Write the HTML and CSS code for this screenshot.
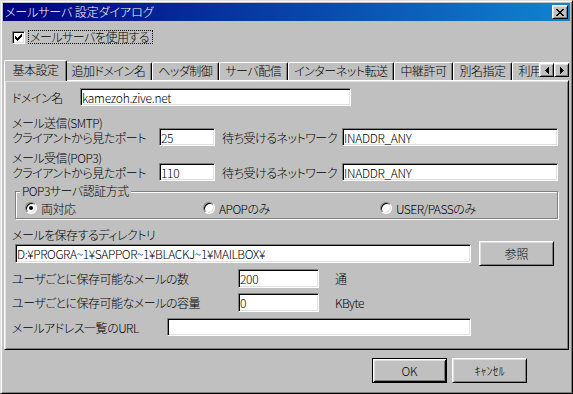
FILE: index.html
```html
<!DOCTYPE html>
<html lang="ja">
<head>
    <meta charset="UTF-8">
    <title>メールサーバ 設定ダイアログ</title>
    <link rel="stylesheet" href="styles.css">
</head>
<body>
<div class="window">
    <div class="titlebar">
        <span class="title">メールサーバ 設定ダイアログ</span>
        <span class="close-btn">
            <svg width="8" height="7" viewBox="0 0 8 7" shape-rendering="crispEdges">
                <path d="M0 0h2v1h-2z M6 0h2v1h-2z M1 1h2v1h-2z M5 1h2v1h-2z M2 2h4v1h-4z M3 3h2v1h-2z M2 4h4v1h-4z M1 5h2v1h-2z M5 5h2v1h-2z M0 6h2v1h-2z M6 6h2v1h-2z"/>
            </svg>
        </span>
    </div>

    <div class="client">
        <div class="enable-row">
            <span class="checkbox">
                <svg width="7" height="7" viewBox="0 0 7 7" shape-rendering="crispEdges">
                    <path d="M0 2h1v3h-1z M1 3h1v3h-1z M2 4h1v3h-1z M3 3h1v3h-1z M4 2h1v3h-1z M5 1h1v3h-1z M6 0h1v3h-1z"/>
                </svg>
            </span>
            <span class="focus-label">メールサーバを使用する</span>
        </div>

        <div class="tabctl">
            <div class="tabs">
                <span class="tab active">基本設定</span>
                <span class="tab">追加ドメイン名</span>
                <span class="tab">ヘッダ制御</span>
                <span class="tab">サーバ配信</span>
                <span class="tab">インターネット転送</span>
                <span class="tab">中継許可</span>
                <span class="tab">別名指定</span>
                <span class="tab">利用者制限</span>
            </div>
            <div class="tab-arrows">
                <span class="arrow-btn">
                    <svg width="4" height="7" viewBox="0 0 4 7" shape-rendering="crispEdges"><path d="M0 3h1v1h-1z M1 2h1v3h-1z M2 1h1v5h-1z M3 0h1v7h-1z"/></svg>
                </span>
                <span class="arrow-btn">
                    <svg width="4" height="7" viewBox="0 0 4 7" shape-rendering="crispEdges"><path d="M3 3h1v1h-1z M2 2h1v3h-1z M1 1h1v5h-1z M0 0h1v7h-1z"/></svg>
                </span>
            </div>

            <div class="panel">
                <div class="row">
                    <span class="lbl lbl-domain">ドメイン名</span>
                    <input class="field field-domain" type="text" value="kamezoh.zive.net">
                </div>

                <div class="caption caption-smtp">メール送信(SMTP)</div>
                <div class="row">
                    <span class="lbl lbl-port">クライアントから見たポート</span>
                    <input class="field field-port" type="text" value="25">
                    <span class="lbl lbl-net">待ち受けるネットワーク</span>
                    <input class="field field-net" type="text" value="INADDR_ANY">
                </div>

                <div class="caption caption-pop">メール受信(POP3)</div>
                <div class="row">
                    <span class="lbl lbl-port">クライアントから見たポート</span>
                    <input class="field field-port" type="text" value="110">
                    <span class="lbl lbl-net">待ち受けるネットワーク</span>
                    <input class="field field-net" type="text" value="INADDR_ANY">
                </div>

                <div class="groupbox">
                    <span class="groupbox-title">POP3サーバ認証方式</span>
                    <span class="radio-item"><span class="radio checked"></span>両対応</span>
                    <span class="radio-item"><span class="radio"></span>APOPのみ</span>
                    <span class="radio-item"><span class="radio"></span>USER/PASSのみ</span>
                </div>

                <div class="caption caption-dir">メールを保存するディレクトリ</div>
                <div class="row row-dir">
                    <input class="field field-dir" type="text" value="D:¥PROGRA~1¥SAPPOR~1¥BLACKJ~1¥MAILBOX¥">
                    <button class="btn btn-browse">参照</button>
                </div>

                <div class="row row-count">
                    <span class="lbl lbl-limit">ユーザごとに保存可能なメールの数</span>
                    <input class="field field-limit" type="text" value="200">
                    <span class="unit">通</span>
                </div>
                <div class="row row-size">
                    <span class="lbl lbl-limit">ユーザごとに保存可能なメールの容量</span>
                    <input class="field field-limit" type="text" value="0">
                    <span class="unit">KByte</span>
                </div>
                <div class="row row-url">
                    <span class="lbl lbl-url">メールアドレス一覧のURL</span>
                    <input class="field field-url" type="text" value="">
                </div>
            </div>
        </div>

        <div class="buttons">
            <button class="btn btn-default">OK</button>
            <button class="btn">ｷｬﾝｾﾙ</button>
        </div>
    </div>
</div>
</body>
</html>
```

FILE: styles.css
```css
* {
    box-sizing: border-box;
}

body {
    margin: 0;
    background: #c0c0c0;
    font-family: "Noto Sans CJK JP", "Noto Sans", sans-serif;
    font-size: 12px;
    font-weight: 300;
    font-feature-settings: "palt";
    letter-spacing: -0.5px;
    color: #000;
    overflow: hidden;
}

/* window frame */
.window {
    width: 573px;
    height: 394px;
    display: flex;
    flex-direction: column;
    padding: 2px;
    border: 1px solid;
    border-color: #dfdfdf #000 #000 #dfdfdf;
    box-shadow: inset 1px 1px #fff, inset -1px -1px #808080;
    background: #c0c0c0;
}

.titlebar {
    height: 18px;
    flex: none;
    display: flex;
    align-items: center;
    justify-content: space-between;
    padding: 0 2px 0 2px;
    background: linear-gradient(to right, #000080, #1084d0);
    color: #fff;
    line-height: 14px;
}

.title {
    letter-spacing: -0.1px;
}

.close-btn {
    width: 16px;
    height: 14px;
    display: flex;
    align-items: center;
    justify-content: center;
    padding-right: 1px;
    background: #c0c0c0;
    border: 1px solid;
    border-color: #fff #000 #000 #fff;
    box-shadow: inset 1px 1px #dfdfdf, inset -1px -1px #808080;
}

.client {
    flex: 1;
    display: flex;
    flex-direction: column;
}

/* enable checkbox */
.enable-row {
    margin-top: 9px;
    height: 14px;
    padding-left: 9px;
    display: flex;
    align-items: center;
}

.checkbox {
    width: 13px;
    height: 13px;
    display: flex;
    align-items: center;
    justify-content: center;
    background: #fff;
    border: 1px solid;
    border-color: #808080 #fff #fff #808080;
    box-shadow: inset 1px 1px #000, inset -1px -1px #dfdfdf;
}

.focus-label {
    margin-left: 3px;
    height: 14px;
    line-height: 12px;
    padding: 0 3px 0 1px;
    border: 1px dotted #000;
}

/* tab control */
.tabctl {
    margin: 16px 1px 0;
    position: relative;
}

.tabs {
    height: 21px;
    display: flex;
    align-items: flex-start;
    padding-left: 2px;
    overflow: hidden;
    white-space: nowrap;
}

.tab {
    flex: none;
    margin-top: 2px;
    height: 18px;
    padding: 0 5.5px;
    line-height: 16px;
    background: #c0c0c0;
    border: 1px solid;
    border-color: #fff #000 transparent #fff;
    border-bottom: none;
    border-radius: 2px 2px 0 0;
    box-shadow: inset -1px 0 #808080;
}

.tab.active {
    position: relative;
    z-index: 1;
    margin: 0 -2px;
    height: 21px;
    padding: 0 7.5px;
    line-height: 18px;
}

.tab-arrows {
    position: absolute;
    top: 3px;
    right: 0;
    z-index: 2;
    display: flex;
}

.arrow-btn {
    width: 15px;
    height: 14px;
    display: flex;
    align-items: center;
    justify-content: center;
    background: #c0c0c0;
    border: 1px solid;
    border-color: #fff #000 #000 #fff;
    box-shadow: inset 1px 1px #dfdfdf, inset -1px -1px #808080;
}

.panel {
    margin-top: -1px;
    height: 270px;
    display: flex;
    flex-direction: column;
    padding: 7px 0 0 7px;
    border: 1px solid;
    border-color: #fff #000 #000 #fff;
    box-shadow: inset 1px 1px #dfdfdf, inset -1px -1px #808080;
}

/* panel rows */
.row {
    display: flex;
    align-items: center;
    height: 18px;
    flex: none;
}

.lbl {
    flex: none;
    white-space: nowrap;
}

.caption {
    height: 11px;
    line-height: 11px;
    flex: none;
}

.caption-smtp { margin-top: 11px; }
.caption-pop { margin-top: 6px; }
.caption-dir {
    margin-top: 10px;
    height: 12px;
    line-height: 12px;
}

.field {
    flex: none;
    height: 18px;
    padding: 0 1px;
    margin: 0;
    font: inherit;
    font-feature-settings: "palt";
    letter-spacing: -0.3px;
    color: #000;
    background: #fff;
    border: 1px solid;
    border-color: #808080 #fff #fff #808080;
    box-shadow: inset 1px 1px #000, inset -1px -1px #dfdfdf;
    outline: none;
}

.lbl-domain { width: 68px; }
.field-domain { width: 271px; }

.lbl-port { width: 147px; }
.field-port { width: 56px; }
.lbl-net { width: 120px; margin-left: 7px; }
.field-net { width: 216px; }

/* auth group box */
.groupbox {
    position: relative;
    margin: 10px 0 0 3px;
    width: 543px;
    height: 28px;
    flex: none;
    display: flex;
    align-items: center;
    padding: 6px 0 0 9px;
    border: 1px solid #808080;
    box-shadow: inset 1px 1px #fff, 1px 1px #fff;
}

.groupbox-title {
    position: absolute;
    top: -8px;
    left: 4px;
    padding: 0 2px;
    line-height: 14px;
    background: #c0c0c0;
}

.radio-item {
    width: 178px;
    flex: none;
    display: flex;
    align-items: center;
    gap: 4px;
}

.radio-item:nth-of-type(3) { width: 177px; }

.radio {
    width: 12px;
    height: 12px;
    flex: none;
    border-radius: 50%;
    background: #fff;
    border: 1px solid;
    border-color: #808080 #fff #fff #808080;
    box-shadow: inset 1px 1px #000, inset -1px -1px #dfdfdf;
    display: flex;
    align-items: center;
    justify-content: center;
}

.radio.checked::after {
    content: "";
    width: 4px;
    height: 4px;
    border-radius: 50%;
    background: #000;
}

/* directory row */
.row-dir {
    height: 25px;
}

.field-dir {
    width: 456px;
    height: 19px;
    margin-left: 3px;
    letter-spacing: -0.4px;
}

.btn {
    width: 75px;
    height: 25px;
    padding: 0;
    font: inherit;
    font-feature-settings: "palt";
    color: #000;
    background: #c0c0c0;
    border: 1px solid;
    border-color: #fff #000 #000 #fff;
    box-shadow: inset 1px 1px #dfdfdf, inset -1px -1px #808080;
}

.btn-browse {
    margin-left: 8px;
}

.btn-default {
    border-color: #000;
    box-shadow: inset 1px 1px #fff, inset -1px -1px #000, inset 2px 2px #dfdfdf, inset -2px -2px #808080;
}

.row-count { margin-top: 3px; height: 19px; }
.row-size { margin-top: 5px; height: 19px; }
.row-url { margin-top: 6px; }

.lbl-limit { width: 226px; }
.field-limit { width: 81px; height: 19px; }
.unit { margin-left: 16px; }

.lbl-url { width: 155px; }
.field-url { width: 304px; }

/* OK / cancel */
.buttons {
    margin-top: 8px;
    display: flex;
    justify-content: flex-end;
    gap: 5px;
    padding-right: 43px;
}
```
